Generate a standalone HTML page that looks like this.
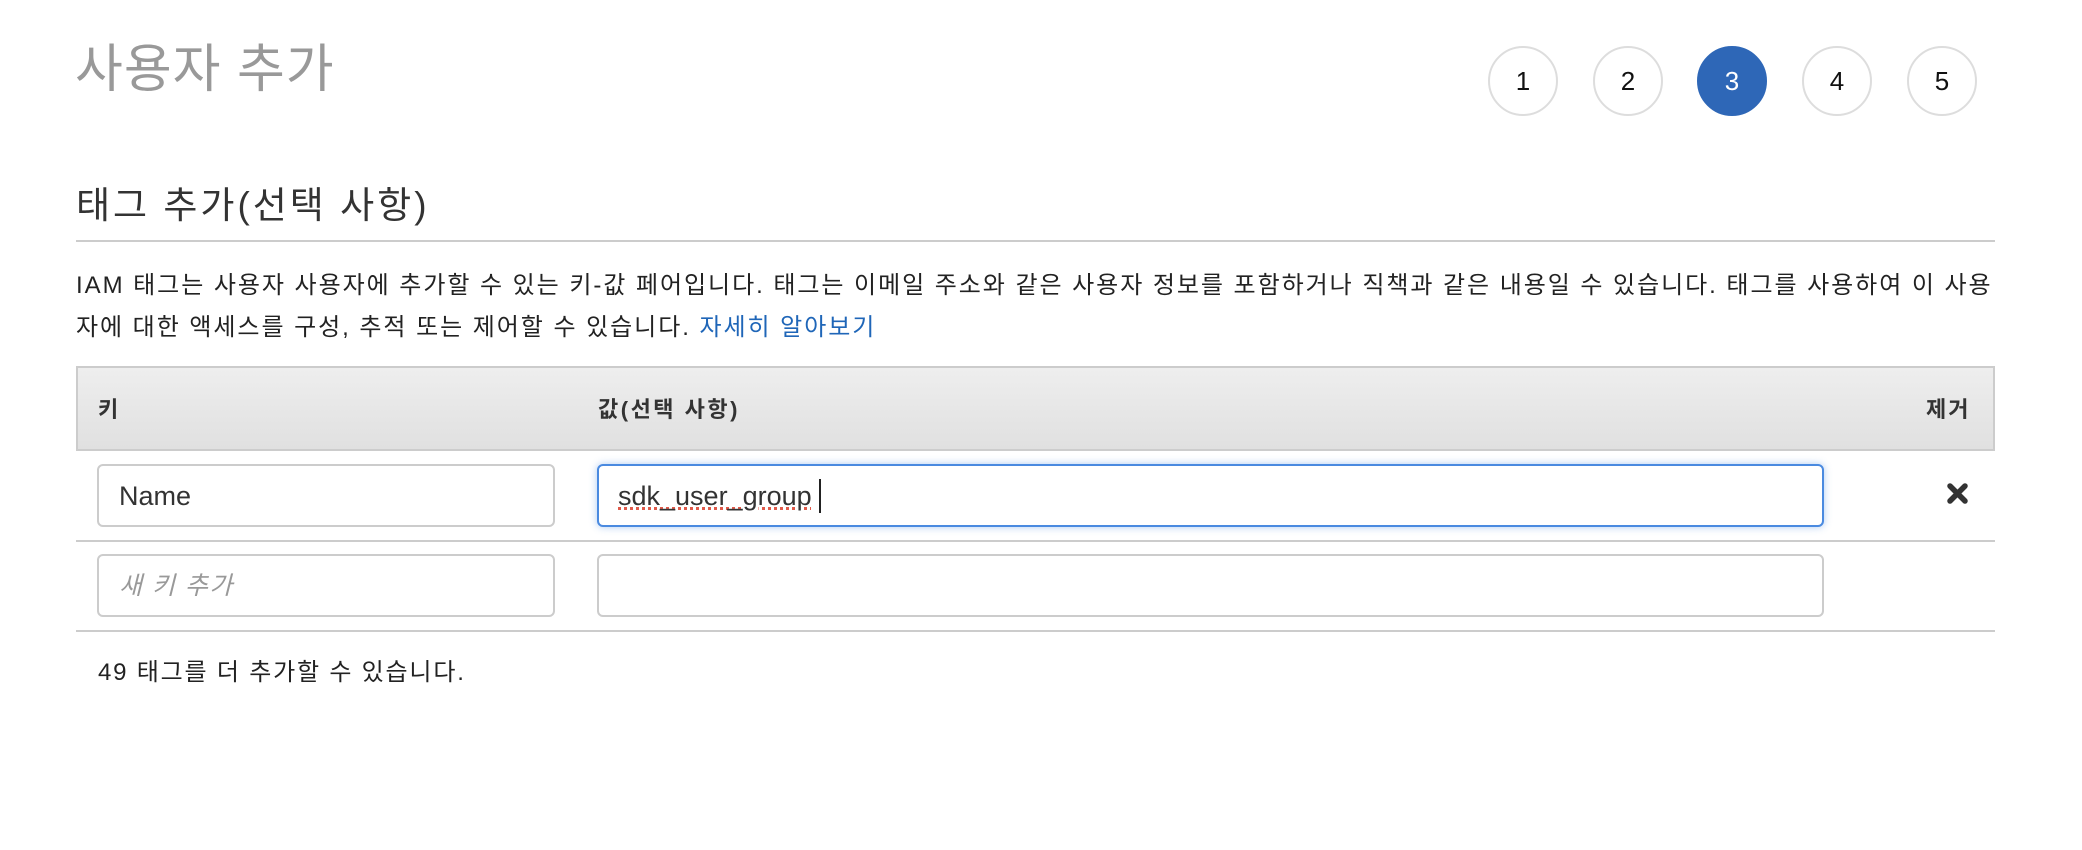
<!DOCTYPE html>
<html><head><meta charset="utf-8"><style>
body{margin:0;width:2082px;height:850px;background:#fff;font-family:"Liberation Sans","Noto Sans CJK KR",sans-serif;color:#333;position:relative;overflow:hidden}
.a{position:absolute;white-space:nowrap}
.c{position:absolute;top:46px;width:66px;height:66px;border:2px solid #ddd;border-radius:50%;text-align:center;line-height:66px;font-size:26px;color:#111}
.inp{position:absolute;border:2px solid #ccc;border-radius:6px;box-sizing:border-box;background:#fff}
</style></head><body>
<div class="a" style="left:75px;top:38px;font-size:52px;color:#999;line-height:64px;letter-spacing:1px">사용자 추가</div>
<div class="c" style="left:1488px">1</div>
<div class="c" style="left:1593px">2</div>
<div class="c" style="left:1697px;background:#2e67b7;border-color:#2e67b7;color:#fff">3</div>
<div class="c" style="left:1802px">4</div>
<div class="c" style="left:1907px">5</div>
<div class="a" style="left:76px;top:181px;font-size:37px;line-height:50px;color:#333;letter-spacing:3px">태그 추가(선택 사항)</div>
<div class="a" style="left:76px;top:240px;width:1919px;height:2px;background:#ccc"></div>
<div class="a" style="left:76px;top:265px;font-size:24px;line-height:42px;color:#222;letter-spacing:1.95px">IAM 태그는 사용자 사용자에 추가할 수 있는 키-값 페어입니다. 태그는 이메일 주소와 같은 사용자 정보를 포함하거나 직책과 같은 내용일 수 있습니다. 태그를 사용하여 이 사용<br>자에 대한 액세스를 구성, 추적 또는 제어할 수 있습니다. <span style="color:#1f66b8">자세히 알아보기</span></div>
<div class="a" style="left:76px;top:366px;width:1919px;height:85px;box-sizing:border-box;border:2px solid #ccc;background:linear-gradient(#eeeeee,#e0e0e0)"></div>
<div class="a" style="left:98px;top:393px;font-size:22px;font-weight:bold;line-height:34px">키</div>
<div class="a" style="left:598px;top:393px;font-size:22px;font-weight:bold;line-height:34px;letter-spacing:2.5px">값(선택 사항)</div>
<div class="a" style="left:1926px;top:393px;font-size:22px;font-weight:bold;line-height:34px;letter-spacing:2px">제거</div>
<div class="inp" style="left:97px;top:464px;width:458px;height:63px"></div>
<div class="a" style="left:119px;top:480px;font-size:27px;line-height:32px">Name</div>
<div class="inp" style="left:597px;top:464px;width:1227px;height:63px;border-color:#4a8ae0;box-shadow:0 0 8px rgba(74,138,224,.45)"></div>
<div class="a" style="left:618px;top:480px;font-size:27px;line-height:32px;text-decoration:underline dotted #e05a4a;text-decoration-thickness:3px">sdk_user_group</div>
<div class="a" style="left:819px;top:479px;width:2px;height:34px;background:#222"></div>
<svg class="a" style="left:1946px;top:482px" width="23" height="23" viewBox="0 0 23 23"><path d="M4 4L19 19M19 4L4 19" stroke="#333" stroke-width="5.5" stroke-linecap="round"/></svg>
<div class="a" style="left:76px;top:540px;width:1919px;height:2px;background:#ccc"></div>
<div class="inp" style="left:97px;top:554px;width:458px;height:63px"></div>
<div class="a" style="left:119px;top:570px;font-size:25px;line-height:32px;color:#999;font-style:italic;letter-spacing:1.5px">새 키 추가</div>
<div class="inp" style="left:597px;top:554px;width:1227px;height:63px"></div>
<div class="a" style="left:76px;top:630px;width:1919px;height:2px;background:#ccc"></div>
<div class="a" style="left:98px;top:657px;font-size:24px;line-height:32px;color:#222;letter-spacing:1.8px">49 태그를 더 추가할 수 있습니다.</div>
</body></html>
